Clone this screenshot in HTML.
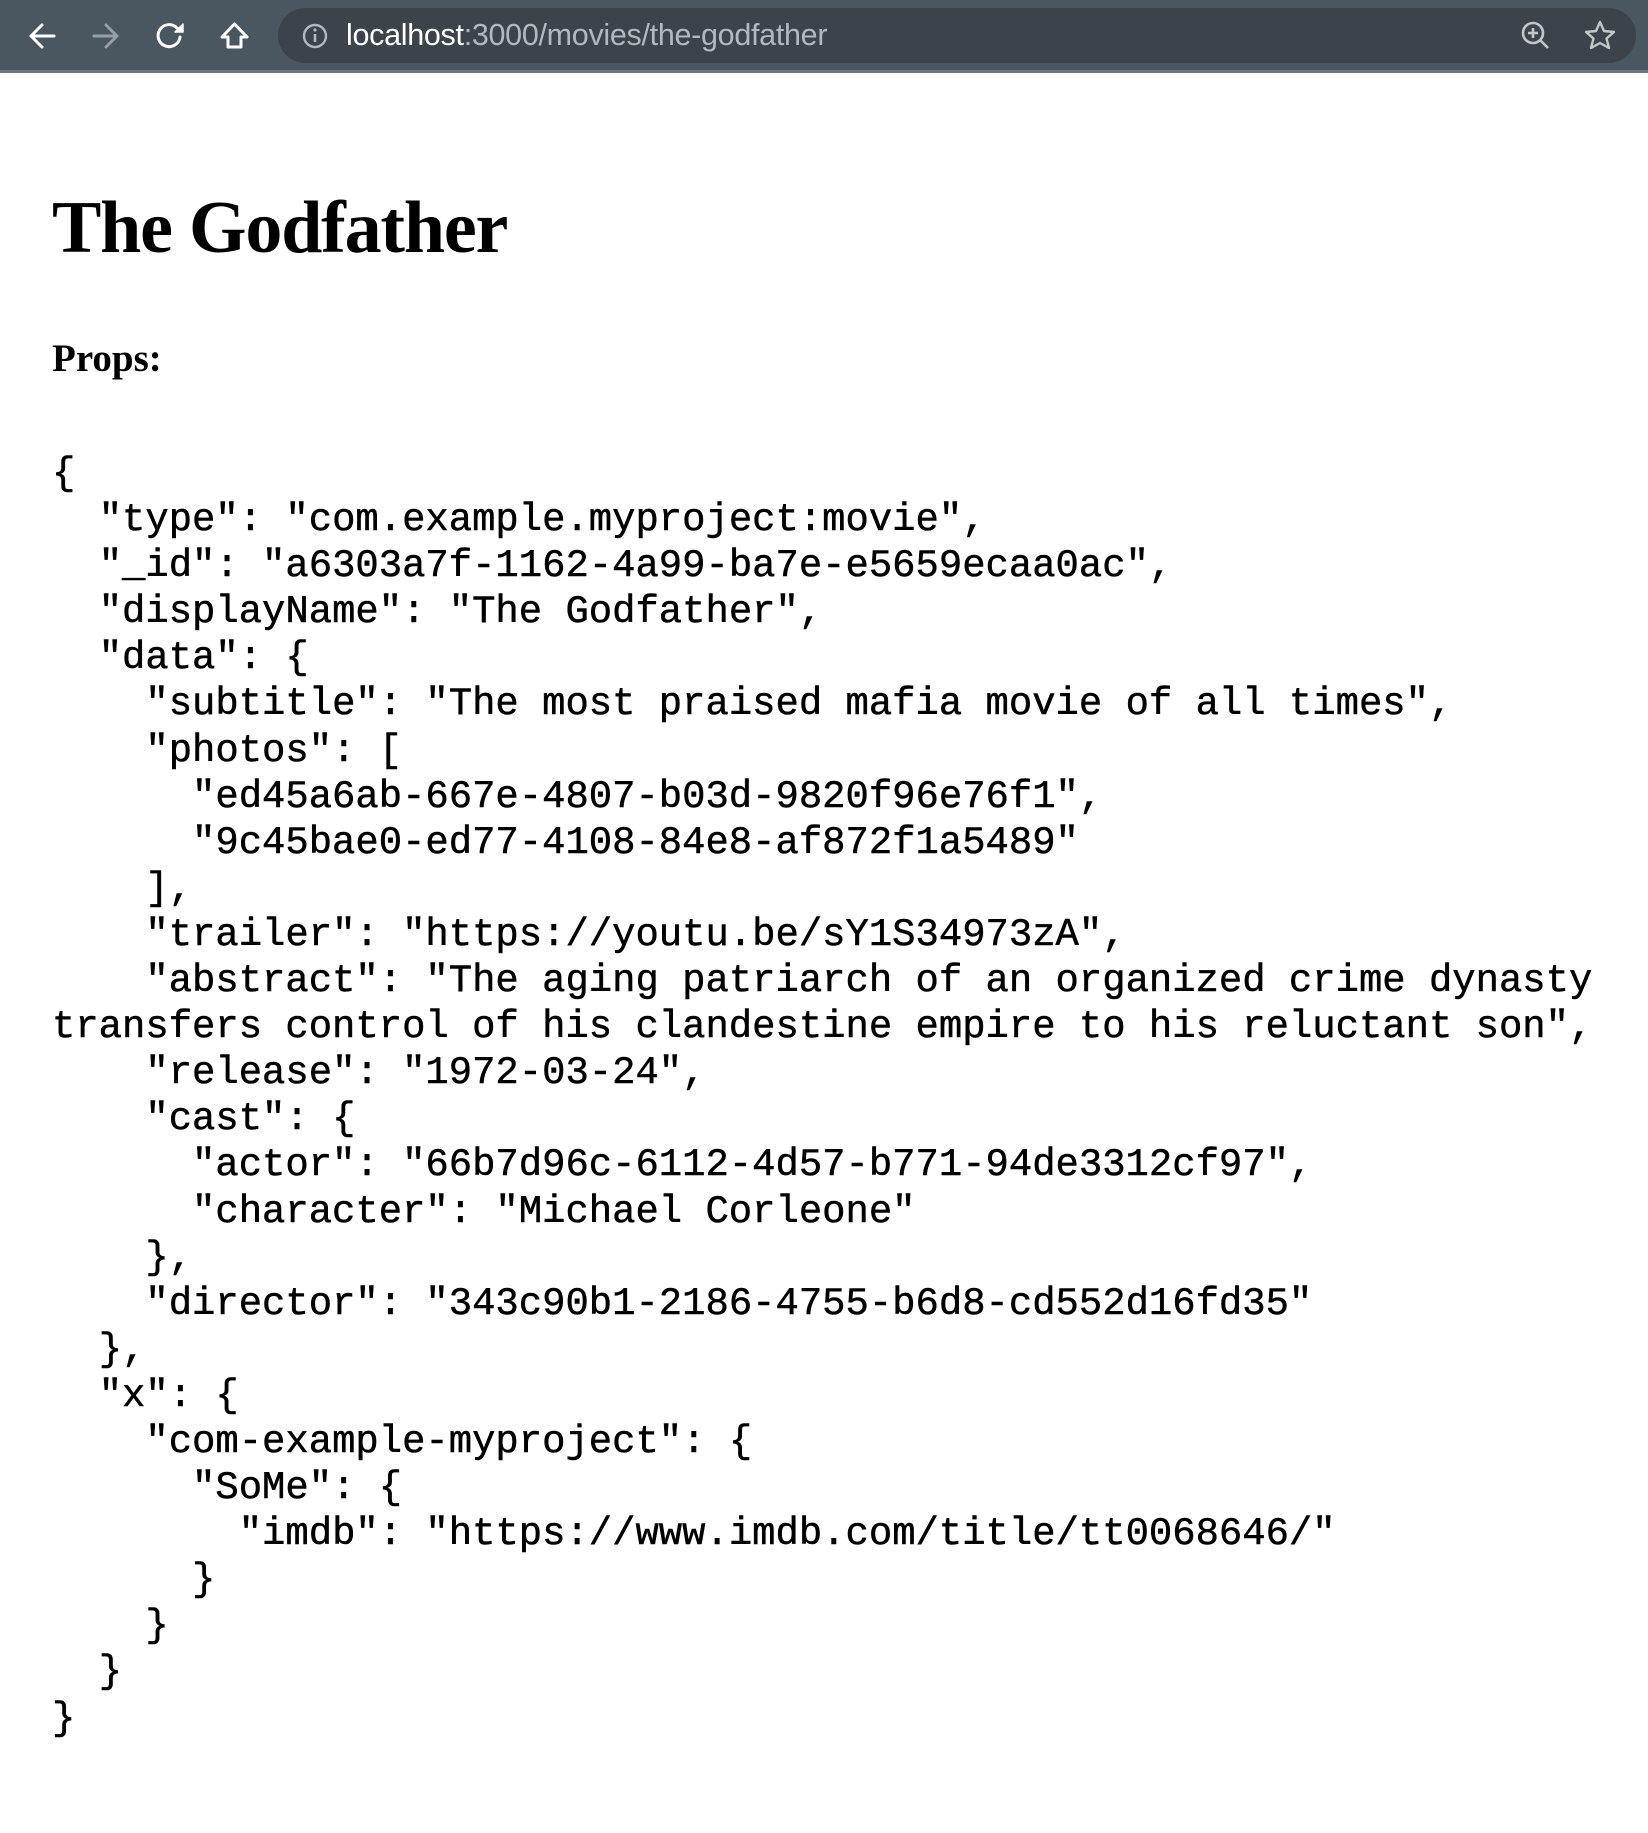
<!DOCTYPE html>
<html><head><meta charset="utf-8">
<style>
html,body{margin:0;padding:0;background:#fff;width:1648px;height:1833px;overflow:hidden;position:relative}
.bar{position:absolute;left:0;top:0;width:1648px;height:70px;background:#4a5660;border-bottom:3px solid #6b7680}
.pill{position:absolute;left:278px;top:8px;width:1358px;height:55px;background:#3c434b;border-radius:28px}
.url{position:absolute;left:346px;top:15px;font:30.5px "Liberation Sans",sans-serif;color:#b3b8bd;line-height:40px;letter-spacing:-0.3px}
.url b{font-weight:normal;color:#fff}
svg{position:absolute}
h1{position:absolute;left:52px;top:183px;margin:0;font:bold 74px "Liberation Serif",serif;line-height:90px;letter-spacing:-1.2px}
h3{position:absolute;left:52px;top:334px;margin:0;font:bold 39px "Liberation Serif",serif;line-height:50px}
pre{position:absolute;left:52px;top:451px;width:1560px;margin:0;font:38.9px "Liberation Mono",monospace;line-height:46.1px;white-space:pre-wrap;color:#000;-webkit-text-stroke:0.5px #000}
</style></head><body>
<div class="bar"></div>
<svg width="260" height="70" style="left:0;top:0" fill="none" stroke-width="3" stroke-linecap="round" stroke-linejoin="round">
<path d="M54 36H31M42 25L31 36L42 47" stroke="#fff"/>
<path d="M94 36H117M106 25L117 36L106 47" stroke="#98a0a7"/>
<path d="M180 37A11 11 0 1 1 177 28" stroke="#fff"/>
<path d="M183 24V32H175Z" fill="#fff" stroke="#fff" stroke-width="1.5"/>
<path d="M222 37L234.5 24L247 37H241V47H228V37Z" stroke="#fff" stroke-width="3"/>
</svg>
<div class="pill"></div>
<svg width="40" height="40" style="left:295px;top:16px" fill="none"><circle cx="20" cy="20" r="11" stroke="#b3b8bd" stroke-width="2.4"/><path d="M20 18V26" stroke="#b3b8bd" stroke-width="2.6"/><circle cx="20" cy="14" r="1.6" fill="#b3b8bd"/></svg>
<div class="url"><b>localhost</b>:3000/movies/the-godfather</div>
<svg width="40" height="40" style="left:1516px;top:16px" fill="none" stroke="#c4c7ca" stroke-width="2.6"><circle cx="17" cy="17" r="10"/><path d="M24 24L32 32M17 12V22M12 17H22"/></svg>
<svg width="40" height="40" style="left:1580px;top:16px" fill="none" stroke="#c4c7ca" stroke-width="2.4" stroke-linejoin="round"><path d="M20 6L24 15L34 16L26.5 22.5L29 32L20 27L11 32L13.5 22.5L6 16L16 15Z"/></svg>
<h1>The Godfather</h1>
<h3>Props:</h3>
<pre>{
  "type": "com.example.myproject:movie",
  "_id": "a6303a7f-1162-4a99-ba7e-e5659ecaa0ac",
  "displayName": "The Godfather",
  "data": {
    "subtitle": "The most praised mafia movie of all times",
    "photos": [
      "ed45a6ab-667e-4807-b03d-9820f96e76f1",
      "9c45bae0-ed77-4108-84e8-af872f1a5489"
    ],
    "trailer": "https://youtu.be/sY1S34973zA",
    "abstract": "The aging patriarch of an organized crime dynasty transfers control of his clandestine empire to his reluctant son",
    "release": "1972-03-24",
    "cast": {
      "actor": "66b7d96c-6112-4d57-b771-94de3312cf97",
      "character": "Michael Corleone"
    },
    "director": "343c90b1-2186-4755-b6d8-cd552d16fd35"
  },
  "x": {
    "com-example-myproject": {
      "SoMe": {
        "imdb": "https://www.imdb.com/title/tt0068646/"
      }
    }
  }
}</pre>
</body></html>
